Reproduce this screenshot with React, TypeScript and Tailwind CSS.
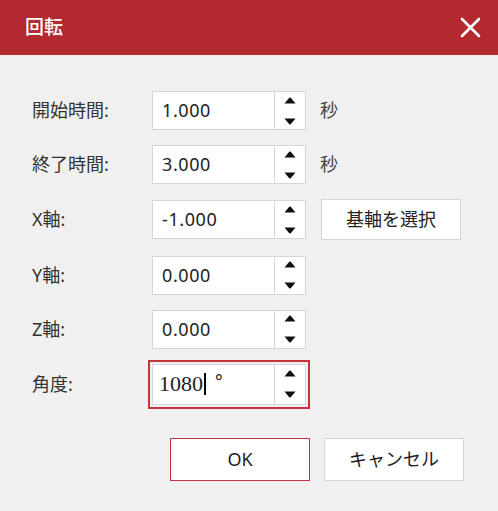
import React from "react";

const font = { fontFamily: '"Noto Sans", "Noto Sans CJK JP", sans-serif' };

function Spinner() {
  return (
    <div className="flex h-full w-[31px] flex-col items-center justify-center border-l border-[#d5d5dd]">
      <svg width="12" height="7" viewBox="0 0 12 7" className="mb-[14px]">
        <path d="M6 0.5 C6.6 0.5 7 0.9 7.4 1.4 L11.5 6.5 L0.5 6.5 L4.6 1.4 C5 0.9 5.4 0.5 6 0.5 Z" fill="#111" />
      </svg>
      <svg width="12" height="7" viewBox="0 0 12 7">
        <path d="M0.5 0.5 L11.5 0.5 L7.4 5.6 C7 6.1 6.6 6.5 6 6.5 C5.4 6.5 5 6.1 4.6 5.6 Z" fill="#111" />
      </svg>
    </div>
  );
}

function NumberBox({ value }: { value: string }) {
  return (
    <div className="flex h-[39px] w-[154px] items-center border border-[#d5d5dd] bg-white">
      <div className="flex-1 pl-[9px] text-[18px] tracking-[0.6px] text-[#222]" style={font}>
        {value}
      </div>
      <Spinner />
    </div>
  );
}

function Row({ label, children }: { label: string; children: React.ReactNode }) {
  return (
    <div className="flex items-center">
      <div className="w-[120px] text-[18px] text-[#333]" style={font}>
        {label}
      </div>
      {children}
    </div>
  );
}

export default function App() {
  return (
    <div className="flex h-[511px] w-[498px] flex-col bg-[#f0f0f0]" style={font}>
      <div className="flex h-[55px] shrink-0 items-center justify-between bg-[#b22a30] pl-[25px] pr-[17px]">
        <div className="text-[19px] font-medium text-white" style={font}>
          回転
        </div>
        <svg width="21" height="21" viewBox="0 0 21 21">
          <path d="M2 2 L19 19 M19 2 L2 19" stroke="#fff" strokeWidth="2.6" strokeLinecap="round" />
        </svg>
      </div>
      <div className="flex flex-col gap-[15.2px] pl-[32px] pt-[36px]">
        <Row label="開始時間:">
          <NumberBox value="1.000" />
          <div className="ml-[14px] text-[18px] text-[#444]">秒</div>
        </Row>
        <Row label="終了時間:">
          <NumberBox value="3.000" />
          <div className="ml-[14px] text-[18px] text-[#444]">秒</div>
        </Row>
        <Row label="X軸:">
          <NumberBox value="-1.000" />
          <button className="ml-[15px] flex h-[41px] w-[140px] items-center justify-center border border-[#d5d5dd] bg-white text-[18px] text-[#222]">
            基軸を選択
          </button>
        </Row>
        <Row label="Y軸:">
          <NumberBox value="0.000" />
        </Row>
        <Row label="Z軸:">
          <NumberBox value="0.000" />
        </Row>
        <Row label="角度:">
          <div className="flex h-[41px] w-[154px] items-center border border-[#d5d5dd] bg-white outline-2 outline-offset-2 outline-[#c4343b]">
            <div className="flex flex-1 items-center pl-[6px] text-[#222]">
              <span className="text-[22px] leading-none" style={{ fontFamily: '"Liberation Serif", serif' }}>
                1080
              </span>
              <span className="ml-[1px] inline-block h-[22px] w-[2px] bg-black" />
              <span className="ml-[9px] -mt-[6px] text-[18px] leading-none" style={font}>
                °
              </span>
            </div>
            <Spinner />
          </div>
        </Row>
      </div>
      <div className="mt-[33px] flex gap-[14px] pl-[170px]">
        <button className="flex h-[43px] w-[140px] items-center justify-center border border-[#c4343b] bg-white text-[18px] text-[#222]">
          OK
        </button>
        <button className="flex h-[43px] w-[140px] items-center justify-center border border-[#d5d5dd] bg-white text-[18px] text-[#222]">
          キャンセル
        </button>
      </div>
    </div>
  );
}
